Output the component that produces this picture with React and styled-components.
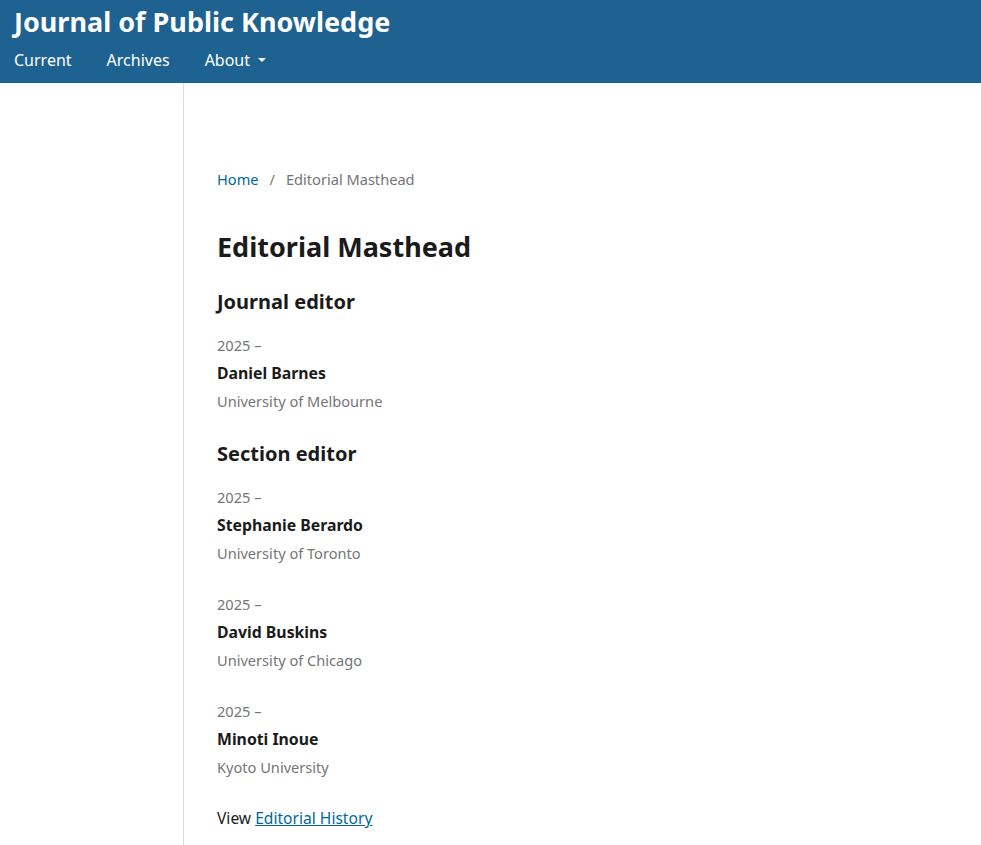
import styled, { createGlobalStyle } from "styled-components";

const GlobalStyle = createGlobalStyle`
  html, body {
    margin: 0;
    padding: 0;
    background: #fff;
  }
  body {
    font-family: "Noto Sans", "DejaVu Sans", sans-serif;
    font-size: 14px;
    color: rgba(0, 0, 0, 0.87);
  }
`;

const groups = [
  {
    role: "Journal editor",
    people: [{ since: "2025 –", name: "Daniel Barnes", org: "University of Melbourne" }],
  },
  {
    role: "Section editor",
    people: [
      { since: "2025 –", name: "Stephanie Berardo", org: "University of Toronto" },
      { since: "2025 –", name: "David Buskins", org: "University of Chicago" },
      { since: "2025 –", name: "Minoti Inoue", org: "Kyoto University" },
    ],
  },
];

const App = () => (
  <>
    <GlobalStyle />
    <Header>
      <SiteTitle>Journal of Public Knowledge</SiteTitle>
      <Nav>
        <NavLink>Current</NavLink>
        <NavLink>Archives</NavLink>
        <NavLink>
          About <Caret />
        </NavLink>
      </Nav>
    </Header>
    <Body>
      <Sidebar />
      <Main>
        <Breadcrumbs>
          <Crumb href="#">Home</Crumb>
          <span>/</span>
          <span>Editorial Masthead</span>
        </Breadcrumbs>
        <Title>Editorial Masthead</Title>
        {groups.map((g) => (
          <Group key={g.role}>
            <Role>{g.role}</Role>
            {g.people.map((p) => (
              <Person key={p.name}>
                <Meta>{p.since}</Meta>
                <Name>{p.name}</Name>
                <Meta>{p.org}</Meta>
              </Person>
            ))}
          </Group>
        ))}
        <History>
          View <HistoryLink href="#">Editorial History</HistoryLink>
        </History>
      </Main>
    </Body>
  </>
);

const Header = styled.header`
  background: #1e6292;
  color: #fff;
  height: 83px;
  box-sizing: border-box;
  padding: 3px 14px 0;
`;

const SiteTitle = styled.div`
  font-size: 27px;
  font-weight: 700;
  line-height: 38px;
`;

const Nav = styled.nav`
  display: flex;
  gap: 35px;
  margin-top: 8px;
`;

const NavLink = styled.span`
  display: inline-flex;
  align-items: center;
  font-size: 16px;
  line-height: 22px;
`;

const Caret = styled.span`
  display: inline-block;
  margin-left: 8px;
  width: 0;
  height: 0;
  border-left: 4px solid transparent;
  border-right: 4px solid transparent;
  border-top: 4px solid #fff;
`;

const Body = styled.div`
  display: flex;
  min-height: 762px;
`;

const Sidebar = styled.aside`
  width: 183px;
  flex-shrink: 0;
  border-right: 1px solid #ddd;
`;

const Main = styled.main`
  padding: 86px 0 0 33px;
`;

const Breadcrumbs = styled.nav`
  display: flex;
  gap: 11px;
  font-size: 14.6px;
  line-height: 20px;
  color: #757575;
`;

const Crumb = styled.a`
  color: #006798;
  text-decoration: none;
`;

const Title = styled.h1`
  margin: 38px 0 0;
  font-size: 27px;
  line-height: 40px;
  font-weight: 700;
  color: #1b1b1b;
`;

const Group = styled.section`
  margin-top: 21px;
  & + & {
    margin-top: 25px;
  }
`;

const Role = styled.h2`
  margin: 0 0 15px;
  font-size: 20px;
  line-height: 28px;
  font-weight: 700;
  color: #1b1b1b;
`;

const Person = styled.div`
  display: flex;
  flex-direction: column;
  & + & {
    margin-top: 23px;
  }
`;

const Meta = styled.div`
  font-size: 14.6px;
  line-height: 28px;
  color: #757575;
`;

const Name = styled.div`
  font-size: 15.8px;
  line-height: 28px;
  font-weight: 700;
  color: #1b1b1b;
`;

const History = styled.p`
  margin: 23px 0 0;
  font-size: 15.6px;
  line-height: 28px;
  color: #1b1b1b;
`;

const HistoryLink = styled.a`
  color: #006798;
  text-decoration: underline;
`;

export default App;
